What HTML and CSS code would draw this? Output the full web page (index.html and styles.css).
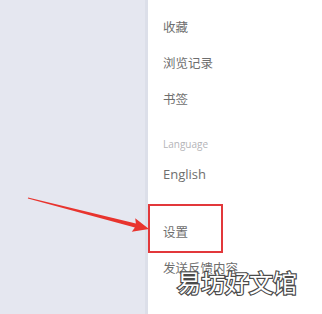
FILE: index.html
```html
<!DOCTYPE html>
<html lang="zh">
<head>
<meta charset="utf-8">
<title>菜单</title>
<link rel="stylesheet" href="styles.css">
</head>
<body>
<div class="page">
  <div class="side"></div>
  <div class="edge"></div>
  <ul class="menu">
    <li class="item">收藏</li>
    <li class="item">浏览记录</li>
    <li class="item">书签</li>
    <li class="label">Language</li>
    <li class="item latin">English</li>
    <li class="item settings">设置</li>
    <li class="item">发送反馈内容</li>
  </ul>
  <div class="highlight"></div>
  <svg class="arrow" width="322" height="314" viewBox="0 0 322 314">
    <polygon points="28,197.6 135.9,223.6 135.2,218.2 149,229 131.8,231.8 134.9,227.4 27.9,198.4" fill="#e8342e"/>
  </svg>
  <div class="watermark">易坊好文馆</div>
</div>
</body>
</html>
```
FILE: styles.css
```css
html, body {
  margin: 0;
  padding: 0;
  background: #ffffff;
}
.page {
  position: relative;
  width: 322px;
  height: 314px;
  display: flex;
  overflow: hidden;
}
.side {
  width: 145px;
  background: #e5e7f0;
}
.edge {
  width: 3px;
  background: #dcdfe9;
}
.menu {
  flex: 1;
  margin: 0;
  padding: 9px 0 0 15px;
  list-style: none;
  display: flex;
  flex-direction: column;
  font-family: "Noto Sans CJK SC", "Open Sans", sans-serif;
  color: #6e6e6e;
}
.item {
  height: 36px;
  line-height: 36px;
  font-size: 12.5px;
}
.latin {
  font-family: "Open Sans", "Noto Sans CJK SC", sans-serif;
  font-size: 13px;
}
.label {
  margin-top: 15px;
  height: 24px;
  line-height: 24px;
  font-family: "Open Sans", sans-serif;
  font-size: 10px;
  color: #b4b4b8;
}
.settings {
  margin-top: 22px;
}
.highlight {
  position: absolute;
  left: 148px;
  top: 204px;
  width: 71px;
  height: 45px;
  border: 2px solid #e2383b;
}
.arrow {
  position: absolute;
  left: 0;
  top: 0;
}
.watermark {
  position: absolute;
  left: 177px;
  top: 267px;
  font-family: "Noto Sans CJK SC", sans-serif;
  font-size: 24px;
  line-height: 30px;
  color: #ffffff;
  -webkit-text-stroke: 2.4px #4a4a4a;
  paint-order: stroke fill;
  white-space: nowrap;
}
```
